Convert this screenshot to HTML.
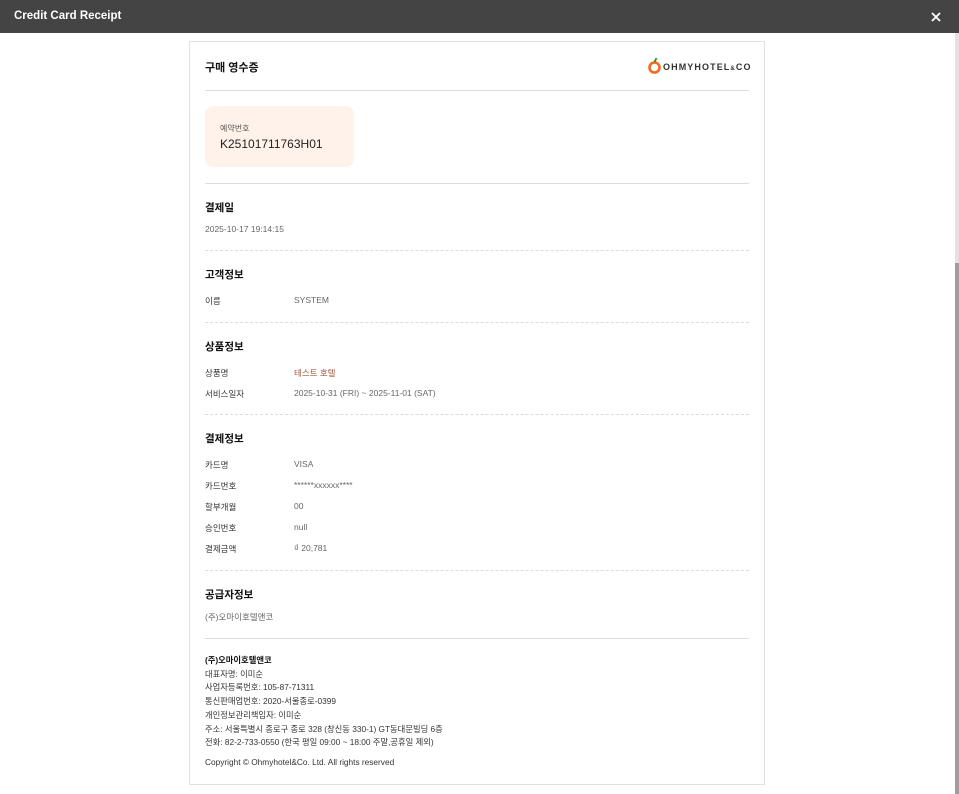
<!DOCTYPE html>
<html><head><meta charset="utf-8"><style>
*{margin:0;padding:0;box-sizing:border-box}
body{width:959px;height:794px;overflow:hidden;background:#fff;font-family:"Liberation Sans","Noto Sans CJK KR",sans-serif;position:relative;color:#222}
.top{position:absolute;left:0;top:0;width:959px;height:33px;background:#444}
.top .t{position:absolute;left:14px;top:10px;color:#fff;font-weight:bold;font-size:11.5px}
.sb{position:absolute;left:955px;top:33px;width:4px;height:761px;background:#e2e2e2}
.sbt{position:absolute;left:955px;top:263px;width:4px;height:531px;background:#9e9e9e}
.card{position:absolute;left:189px;top:41px;width:576px;height:744px;border:1px solid #e0e0e0;border-bottom:1px solid #e0e0e0}
.a{position:absolute;white-space:nowrap}
.h{font-size:10.5px;font-weight:bold;color:#111}
.l{font-size:8.5px;color:#333}
.v{font-size:8.5px;color:#666}
.line{position:absolute;left:205px;width:544px;height:0;border-top:1px solid #dcdcdc}
.dash{position:absolute;left:205px;width:544px;height:0;border-top:1px dashed #dcdcdc}
.f{font-size:8.3px;color:#333;line-height:13.7px}
</style></head><body>
<div class="top"><span class="t">Credit Card Receipt</span>
<svg style="position:absolute;left:931px;top:12px" width="10" height="10"><path d="M1 1L9 9M9 1L1 9" stroke="#fff" stroke-width="1.8"/></svg></div>
<div class="sb"></div><div class="sbt"></div>
<div class="card"></div>
<div class="a h" style="left:205px;top:59px;font-size:11px">구매 영수증</div>
<svg class="a" style="left:647px;top:55px" width="16" height="21"><circle cx="7.5" cy="12.5" r="5" fill="none" stroke="#f06a20" stroke-width="2.6"/><path d="M7.5 7 L9.5 3" stroke="#3a8a2a" stroke-width="1.8"/></svg>
<div class="a" style="left:663px;top:62px;font-size:9px;font-weight:bold;color:#333;letter-spacing:1.1px">OHMYHOTEL<span style="font-size:6px">&amp;</span>CO</div>
<div class="line" style="top:90px"></div>
<div class="a" style="left:205px;top:106px;width:149px;height:61px;background:#fef2ea;border-radius:8px"></div>
<div class="a" style="left:220px;top:123px;font-size:8px;color:#555">예약번호</div>
<div class="a" style="left:220px;top:137px;font-size:12px;color:#222">K25101711763H01</div>
<div class="line" style="top:183px"></div>
<div class="a h" style="left:205px;top:200px">결제일</div>
<div class="a v" style="left:205px;top:224px">2025-10-17 19:14:15</div>
<div class="dash" style="top:250px"></div>
<div class="a h" style="left:205px;top:267px">고객정보</div>
<div class="a l" style="left:205px;top:295px">이름</div><div class="a v" style="left:294px;top:295px">SYSTEM</div>
<div class="dash" style="top:322px"></div>
<div class="a h" style="left:205px;top:339px">상품정보</div>
<div class="a l" style="left:205px;top:367px">상품명</div><div class="a v" style="left:294px;top:367px;color:#a0563f">테스트 호텔</div>
<div class="a l" style="left:205px;top:388px">서비스일자</div><div class="a v" style="left:294px;top:388px">2025-10-31 (FRI) ~ 2025-11-01 (SAT)</div>
<div class="dash" style="top:414px"></div>
<div class="a h" style="left:205px;top:431px">결제정보</div>
<div class="a l" style="left:205px;top:459px">카드명</div><div class="a v" style="left:294px;top:459px">VISA</div>
<div class="a l" style="left:205px;top:480px">카드번호</div><div class="a v" style="left:294px;top:480px">******xxxxxx****</div>
<div class="a l" style="left:205px;top:501px">할부개월</div><div class="a v" style="left:294px;top:501px">00</div>
<div class="a l" style="left:205px;top:522px">승인번호</div><div class="a v" style="left:294px;top:522px">null</div>
<div class="a l" style="left:205px;top:543px">결제금액</div><div class="a v" style="left:294px;top:543px"><span style="font-size:9.5px">₫</span> 20,781</div>
<div class="dash" style="top:570px"></div>
<div class="a h" style="left:205px;top:587px">공급자정보</div>
<div class="a v" style="left:205px;top:611px">(주)오마이호텔앤코</div>
<div class="line" style="top:638px"></div>
<div class="a f" style="left:205px;top:654px"><b style="color:#111">(주)오마이호텔앤코</b><br>대표자명: 이미순<br>사업자등록번호: 105-87-71311<br>통신판매업번호: 2020-서울종로-0399<br>개인정보관리책임자: 이미순<br>주소: 서울특별시 종로구 종로 328 (창신동 330-1) GT동대문빌딩 6층<br>전화: 82-2-733-0550 (한국 평일 09:00 ~ 18:00 주말,공휴일 제외)</div>
<div class="a f" style="left:205px;top:756px">Copyright © Ohmyhotel&amp;Co. Ltd. All rights reserved</div>
</body></html>
